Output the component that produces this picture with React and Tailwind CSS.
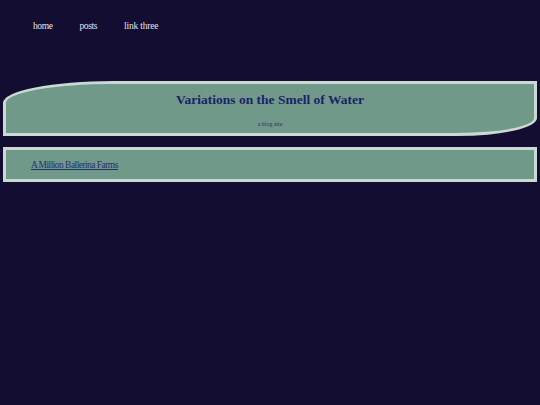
export default function App() {
  return (
    <div className="min-h-[405px] bg-[#120d31] font-['Liberation_Serif',serif] pt-[19px] px-[3px]">
      <nav className="flex gap-[27px] pl-[30px] text-[9.5px] tracking-[-0.4px] text-[#e4e2f0]">
        <a href="#">home</a>
        <a href="#">posts</a>
        <a href="#" className="tracking-[-0.2px]">link three</a>
      </nav>

      <header className="mt-[48px] h-[55px] bg-[#70998a] border-[3px] border-[#cbd9d5] rounded-tl-[110px_22px] rounded-br-[80px_18px] flex flex-col items-center pt-[9px]">
        <h1 className="text-[13.5px] font-bold text-[#1c1f6a] leading-none">Variations on the Smell of Water</h1>
        <p className="mt-[14px] text-[6px] text-[#2a2d5c] leading-none">a blog site</p>
      </header>

      <main className="mt-[11px] h-[35px] bg-[#70998a] border-[3px] border-[#cbd9d5] flex items-center pl-[25px]">
        <a href="#" className="text-[9.5px] tracking-[-0.55px] text-[#23306d] underline">A Million Ballerina Farms</a>
      </main>
    </div>
  );
}
